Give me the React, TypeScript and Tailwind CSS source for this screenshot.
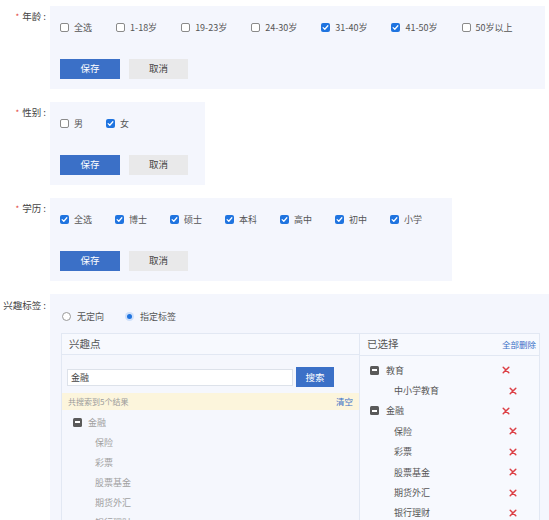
import React from "react";

const FONT = { fontFamily: '"Noto Sans CJK SC", "Noto Sans", sans-serif' };

function Check({ checked }: { checked: boolean }) {
  if (checked) {
    return (
      <span className="w-[9px] h-[9px] rounded-[2px] bg-[#1f74e0] flex items-center justify-center shrink-0">
        <svg width="7" height="7" viewBox="0 0 8 8">
          <path d="M1.3 4.2 L3.2 6 L6.7 2" fill="none" stroke="#fff" strokeWidth="1.4" strokeLinecap="round" strokeLinejoin="round" />
        </svg>
      </span>
    );
  }
  return <span className="w-[9px] h-[9px] rounded-[2px] bg-white border border-[#8a8a8a] shrink-0" />;
}

function CheckItem({ label, checked, wide }: { label: string; checked: boolean; wide?: boolean }) {
  return (
    <div className={`flex items-center gap-[5px] h-[12px] ${wide ? "mr-[24px]" : "mr-[23px]"}`}>
      <Check checked={checked} />
      <span className="text-[9px] leading-none text-[#555]">{label}</span>
    </div>
  );
}

function Buttons() {
  return (
    <div className="flex gap-[9px] mt-[26px]">
      <button className="w-[60px] h-[20px] bg-[#3b70c7] text-white text-[9.5px] leading-none">保存</button>
      <button className="w-[59px] h-[20px] bg-[#e9e9ea] text-[#444] text-[9.5px] leading-none">取消</button>
    </div>
  );
}

function Label({ text, star = true }: { text: string; star?: boolean }) {
  return (
    <div className="w-[50px] shrink-0 flex justify-end pr-[4px] pt-[4px]">
      <span className="text-[9.5px] leading-[12px] text-[#444] whitespace-nowrap">
        {star && <span className="text-[#e23b3b] text-[8px] mr-[3px]">*</span>}
        {text}
        <span className="ml-[2px]">:</span>
      </span>
    </div>
  );
}

function CheckSection({
  label,
  items,
  width,
  wide,
}: {
  label: string;
  items: [string, boolean][];
  width: string;
  wide?: boolean;
}) {
  return (
    <div className="flex mb-[13px]">
      <Label text={label} />
      <div className={`${width} bg-[#f4f6fd] pt-[15px] pb-[10px] pl-[10px]`}>
        <div className="flex items-center">
          {items.map(([l, c]) => (
            <CheckItem key={l} label={l} checked={c} wide={wide} />
          ))}
        </div>
        <Buttons />
      </div>
    </div>
  );
}

function Minus() {
  return (
    <span className="w-[9px] h-[9px] rounded-[1.5px] bg-[#5a5a5a] flex items-center justify-center shrink-0">
      <span className="w-[5px] h-[1.5px] bg-white" />
    </span>
  );
}

function XMark() {
  return (
    <svg width="8" height="8" viewBox="0 0 8 8">
      <path d="M1.2 1.2 L6.8 6.8 M6.8 1.2 L1.2 6.8" stroke="#dc3f45" strokeWidth="1.5" strokeLinecap="round" />
    </svg>
  );
}

export default function App() {
  const ages: [string, boolean][] = [
    ["全选", false],
    ["1-18岁", false],
    ["19-23岁", false],
    ["24-30岁", false],
    ["31-40岁", true],
    ["41-50岁", true],
    ["50岁以上", false],
  ];
  const edu: [string, boolean][] = [
    ["全选", true],
    ["博士", true],
    ["硕士", true],
    ["本科", true],
    ["高中", true],
    ["初中", true],
    ["小学", true],
  ];
  const treeChildren = ["保险", "彩票", "股票基金", "期货外汇", "银行理财"];

  return (
    <div className="w-[549px] h-[520px] overflow-hidden bg-white pt-[6px]" style={FONT}>
      <CheckSection label="年龄" items={ages} width="w-[495px]" wide />
      <CheckSection label="性别" items={[["男", false], ["女", true]]} width="w-[155px]" />
      <CheckSection label="学历" items={edu} width="w-[402px]" />

      <div className="flex">
        <div className="w-[50px] shrink-0 flex justify-end pr-[4px] pt-[5px]">
          <span className="text-[9.5px] leading-[12px] text-[#444] whitespace-nowrap">
            兴趣标签<span className="ml-[2px]">:</span>
          </span>
        </div>
        <div className="w-[499px] h-[226px] bg-[#f4f6fd] pt-[16px] pl-[11px] pr-[9px]">
          <div className="flex items-center h-[12px]">
            <div className="flex items-center gap-[6px] ml-[1px] mr-[21px]">
              <span className="w-[9px] h-[9px] rounded-full border border-[#9a9a9a] bg-white" />
              <span className="text-[9px] leading-none text-[#555]">无定向</span>
            </div>
            <div className="flex items-center gap-[6px]">
              <span className="w-[9px] h-[9px] rounded-full bg-[#cfe0fa] flex items-center justify-center">
                <span className="w-[5px] h-[5px] rounded-full bg-[#1f74e0]" />
              </span>
              <span className="text-[9px] leading-none text-[#555]">指定标签</span>
            </div>
          </div>

          <div className="mt-[11px] border border-[#e2e8f3] flex h-[200px] bg-[#f5f7fd]">
            {/* left */}
            <div className="w-[298px] border-r border-[#e2e8f3] flex flex-col">
              <div className="h-[22px] border-b border-[#e2e8f3] flex items-center pl-[7px] bg-[#f7f9fe]">
                <span className="text-[10.5px] text-[#555] leading-none">兴趣点</span>
              </div>
              <div className="flex items-center pl-[5px] mt-[12px]">
                <div className="w-[226px] h-[17px] bg-white border border-[#dde2ea] flex items-center pl-[3px]">
                  <span className="text-[9px] text-[#444] leading-none">金融</span>
                </div>
                <button className="ml-[3px] w-[38px] h-[20px] bg-[#3b70c7] text-white text-[9.5px] leading-none">搜索</button>
              </div>
              <div className="mt-[6px] h-[17px] bg-[#fcf5dc] flex items-center justify-between pl-[6px] pr-[6px]">
                <span className="text-[8px] text-[#9b9b9b] leading-none">共搜索到5个结果</span>
                <span className="text-[8.5px] text-[#3b70c7] leading-none">清空</span>
              </div>
              <div className="pt-[2px]">
                <div className="h-[20px] flex items-center pl-[11px] gap-[6px]">
                  <Minus />
                  <span className="text-[9px] text-[#a0a0a0] leading-none">金融</span>
                </div>
                {treeChildren.map((c) => (
                  <div key={c} className="h-[20px] flex items-center pl-[33px]">
                    <span className="text-[9px] text-[#a0a0a0] leading-none">{c}</span>
                  </div>
                ))}
              </div>
            </div>
            {/* right */}
            <div className="flex-1 flex flex-col bg-[#f7f9fe]">
              <div className="h-[22px] border-b border-[#e2e8f3] flex items-center justify-between pl-[7px] pr-[3px]">
                <span className="text-[10.5px] text-[#555] leading-none">已选择</span>
                <span className="text-[8.5px] text-[#3b70c7] leading-none">全部删除</span>
              </div>
              <div className="pt-[4px]">
                <div className="h-[20.4px] flex items-center pl-[10px] pr-[29px]">
                  <Minus />
                  <span className="ml-[7px] text-[9px] text-[#555] leading-none">教育</span>
                  <span className="ml-auto flex"><XMark /></span>
                </div>
                <div className="h-[20.4px] flex items-center pl-[34px] pr-[22px]">
                  <span className="text-[9px] text-[#555] leading-none">中小学教育</span>
                  <span className="ml-auto flex"><XMark /></span>
                </div>
                <div className="h-[20.4px] flex items-center pl-[10px] pr-[29px]">
                  <Minus />
                  <span className="ml-[7px] text-[9px] text-[#555] leading-none">金融</span>
                  <span className="ml-auto flex"><XMark /></span>
                </div>
                {treeChildren.map((c) => (
                  <div key={c} className="h-[20.4px] flex items-center pl-[34px] pr-[22px]">
                    <span className="text-[9px] text-[#555] leading-none">{c}</span>
                    <span className="ml-auto flex"><XMark /></span>
                  </div>
                ))}
              </div>
            </div>
          </div>
        </div>
      </div>
    </div>
  );
}
